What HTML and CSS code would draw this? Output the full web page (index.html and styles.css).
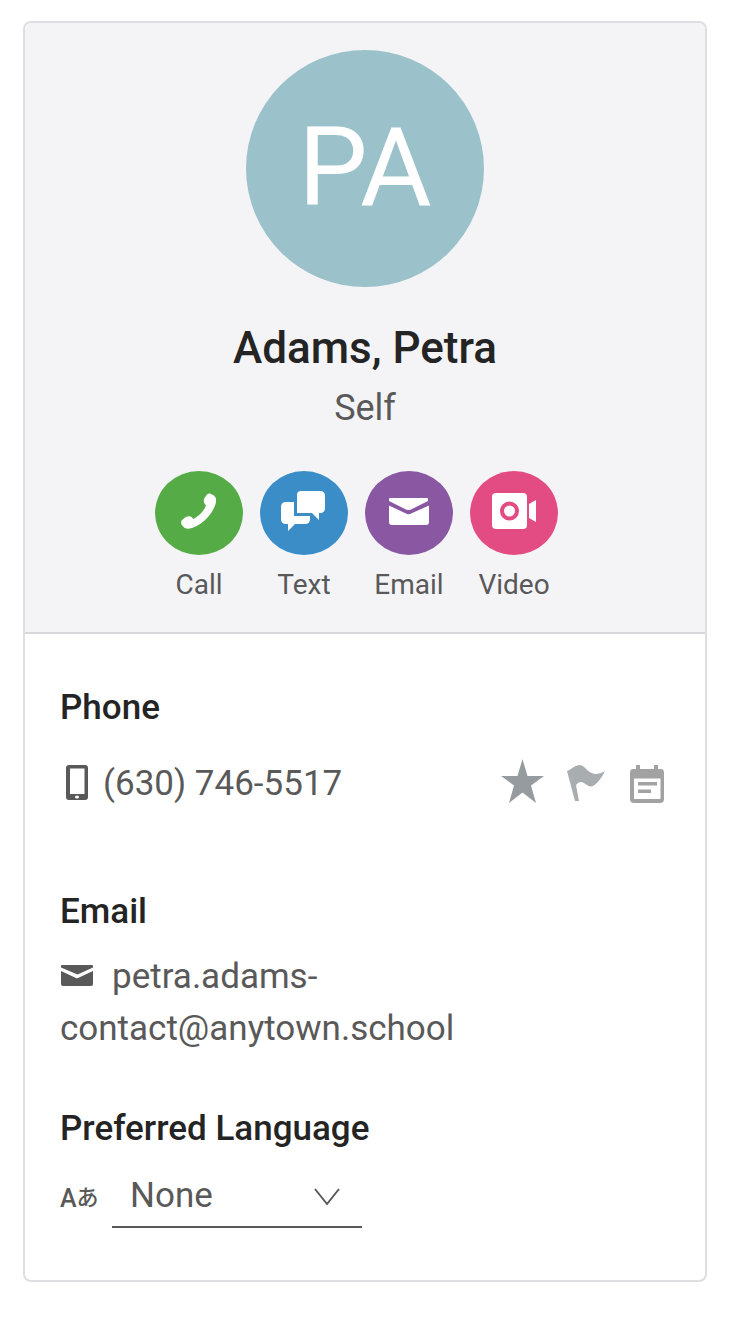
FILE: index.html
```html
<!DOCTYPE html>
<html lang="en">
<head>
<meta charset="utf-8">
<meta name="viewport" content="width=device-width, initial-scale=1">
<title>Adams, Petra</title>
<link rel="stylesheet" href="styles.css">
</head>
<body>
<main class="card">
  <header class="profile">
    <div class="avatar">PA</div>
    <h1 class="name">Adams, Petra</h1>
    <p class="relation">Self</p>
    <div class="actions">
      <button class="action" type="button">
        <span class="disc call"><svg width="88" height="84" viewBox="0 0 88 84" fill="#fff" aria-hidden="true"><path d="M55 22.500L59 24.500Q61.500 26.500 61 31C59 41 49 53 37 57Q31 58.500 29 56.500L26.500 53.500Q25.500 51 27 49L30 46.500Q34 44.500 36.500 46L38.500 48C44 45 49 40 51 34.500L49.500 32.500Q48 30 49.500 27L52 23.500Q53.500 22 55 22.500Z"/></svg></span>
        <span>Call</span>
      </button>
      <button class="action" type="button">
        <span class="disc text"><svg width="88" height="84" viewBox="0 0 88 84" fill="#fff" aria-hidden="true"><path d="M41 20H60Q65 20 65 25V37Q65 42 60 42H59V49L52 42H37V24Q37 20 41 20Z"/><path d="M26 31H34V45H50V48Q50 53 45 53H35L28 60V53H26Q21 53 21 48V36Q21 31 26 31Z"/></svg></span>
        <span>Text</span>
      </button>
      <button class="action" type="button">
        <span class="disc email"><svg width="88" height="84" viewBox="0 0 88 84" fill="#fff" aria-hidden="true"><path d="M25 27H62Q63 27 63 28V30L46 38.500Q43.500 39.500 41 38.500L24 30V28Q24 27 25 27Z"/><path d="M24 34.500L42 43Q43.500 43.500 45 43L64 34.500V51Q64 54 61 54H27Q24 54 24 51Z"/></svg></span>
        <span>Email</span>
      </button>
      <button class="action" type="button">
        <span class="disc video"><svg width="88" height="84" viewBox="0 0 88 84" fill="#fff" aria-hidden="true"><rect x="22" y="22" width="35" height="36" rx="4"/><circle cx="39.500" cy="40" r="7.500" fill="none" stroke="#e24c82" stroke-width="4"/><path d="M59 33L66 29V51L59 47Z"/></svg></span>
        <span>Video</span>
      </button>
    </div>
  </header>

  <div class="details">
    <section class="group phone">
      <h2 class="heading">Phone</h2>
      <div class="phone-row">
        <svg width="34" height="40" viewBox="0 0 34 40" aria-hidden="true"><path fill="#595959" fill-rule="evenodd" d="M9 1H25Q28 1 28 4V33Q28 36 25 36H9Q6 36 6 33V4Q6 1 9 1ZM10 4.500V30H24.500V4.500ZM17 31.500A2 1.500 0 1 0 17 34.500A2 1.500 0 1 0 17 31.500Z"/></svg>
        <a class="number" href="tel:+16307465517">(630) 746-5517</a>
        <div class="marks">
          <button class="mark" type="button" aria-label="Primary"><svg width="44" height="44" viewBox="0 0 44 44" aria-hidden="true"><path fill="#959b9f" d="M21.500 0L26.500 17H43L30 26.500L35 44L21.500 33.500L8 44L13 26.500L0 17H16.500Z"/></svg></button>
          <button class="mark" type="button" aria-label="Flag"><svg width="40" height="44" viewBox="0 0 40 44" aria-hidden="true"><path fill="#a8adb0" d="M0 12C5 10 8 6 13 6C19 7 20 14 28 15C32 15 35 14 38 12C35 18 31 24 26 27C21 29 18 23 14 23Q11 23 9 26L12 42H8Z"/></svg></button>
          <button class="mark" type="button" aria-label="Notes"><svg width="36" height="44" viewBox="0 0 36 44" aria-hidden="true"><path fill="#a2a2a2" fill-rule="evenodd" d="M4 10H7V6H11V10H25V6H29V10H32Q35 10 35 14V40Q35 44 31 44H5Q1 44 1 40V14Q1 10 4 10ZM5 19.500V40H31.500V19.500Z"/><path fill="#a2a2a2" d="M9 23H28V26.500H9ZM9 30.500H22V34H9Z"/></svg></button>
        </div>
      </div>
    </section>

    <section class="group mail">
      <h2 class="heading">Email</h2>
      <p class="address"><svg class="envelope" width="34" height="22" viewBox="0 0 34 22" fill="#595959" aria-hidden="true"><path d="M2 0H32Q33 0 33 1V2.500L17.500 9.500L1 2.500V1Q1 0 2 0Z"/><path d="M1 6L16 13Q17 13.500 18 13L33 6V19Q33 21 31 21H3Q1 21 1 19Z"/></svg><a href="mailto:petra.adams-contact@anytown.school">petra.adams-contact@anytown.school</a></p>
    </section>

    <section class="group">
      <h2 class="heading"><label for="language">Preferred Language</label></h2>
      <div class="language-row">
        <span class="glyphs" aria-hidden="true"><span>A</span><span class="kana">あ</span></span>
        <span class="picker">
          <select id="language"><option>None</option></select>
          <svg class="chevron" width="26" height="18" viewBox="0 0 26 18" fill="none" stroke="#595959" stroke-width="2" aria-hidden="true"><path d="M1 1L13 16L25 1"/></svg>
        </span>
      </div>
    </section>
  </div>
</main>
</body>
</html>
```
FILE: styles.css
```css
* {
  box-sizing: border-box;
}

body {
  margin: 0;
  padding: 21px 25px 36px 23px;
  background: #fff;
  color: #595959;
  font: 400 35px/52px Roboto, "Liberation Sans", sans-serif;
}

h1, h2, p {
  margin: 0;
}

a {
  color: inherit;
  text-decoration: none;
}

button, select {
  margin: 0;
  padding: 0;
  border: 0;
  background: none;
  color: inherit;
  font: inherit;
}

svg {
  display: block;
  flex: none;
}

.card {
  overflow: hidden;
  border: 2px solid #dedee0;
  border-radius: 8px;
}

.profile {
  display: flex;
  flex-direction: column;
  align-items: center;
  padding: 27px 24px 28px;
  border-bottom: 2px solid #d8d8da;
  background: #f4f4f7;
}

.avatar {
  width: 238px;
  height: 237px;
  border-radius: 50%;
  background: #9bc2cb;
  color: #fff;
  font-size: 110px;
  line-height: 236px;
  text-align: center;
}

.name {
  margin-top: 35px;
  color: #242424;
  font-size: 44px;
  font-weight: 500;
  line-height: 52px;
}

.relation {
  margin-top: 8px;
  font-size: 36px;
}

.actions {
  display: flex;
  margin-top: 37px;
}

.action {
  display: flex;
  flex-direction: column;
  align-items: center;
  gap: 11px;
  margin-right: 17px;
  font-size: 28px;
  line-height: 38px;
}

.disc {
  border-radius: 50%;
}

.call { background: #55ac46; }
.text { background: #3a8dc6; }
.email { background: #8a58a2; }
.video { background: #e24c82; }

.details {
  display: flex;
  flex-direction: column;
  gap: 50px;
  padding: 50px 35px 52px;
}

.heading {
  color: #242424;
  font-size: 35px;
  font-weight: 500;
  line-height: 48px;
}

.phone {
  padding-bottom: 28px;
}

.phone-row {
  display: flex;
  align-items: center;
  margin-top: 26px;
}

.number {
  margin-left: 9px;
}

.marks {
  display: flex;
  gap: 22px;
  margin-left: auto;
  padding: 0 5px 6px 0;
}

.mark {
  line-height: 44px;
}

.address {
  margin-top: 15px;
  overflow-wrap: break-word;
}

.envelope {
  display: inline-block;
  margin-right: 18px;
  vertical-align: 1px;
}

.language-row {
  display: flex;
  align-items: flex-start;
  gap: 16px;
  margin-top: 12px;
}

.glyphs {
  display: flex;
  width: 36px;
  padding-top: 8px;
  font-size: 25px;
  font-weight: 500;
}

.kana {
  font-family: "Noto Sans CJK JP", sans-serif;
  font-size: 22px;
  line-height: 44px;
}

.picker {
  display: grid;
  align-items: center;
  width: 250px;
  height: 63px;
  border-bottom: 2px solid #595959;
}

.picker select {
  grid-area: 1 / 1;
  width: 100%;
  height: 100%;
  padding: 0 56px 0 18px;
  appearance: none;
}

.chevron {
  grid-area: 1 / 1;
  justify-self: end;
  margin: 2px 22px 0 0;
  pointer-events: none;
}
```
